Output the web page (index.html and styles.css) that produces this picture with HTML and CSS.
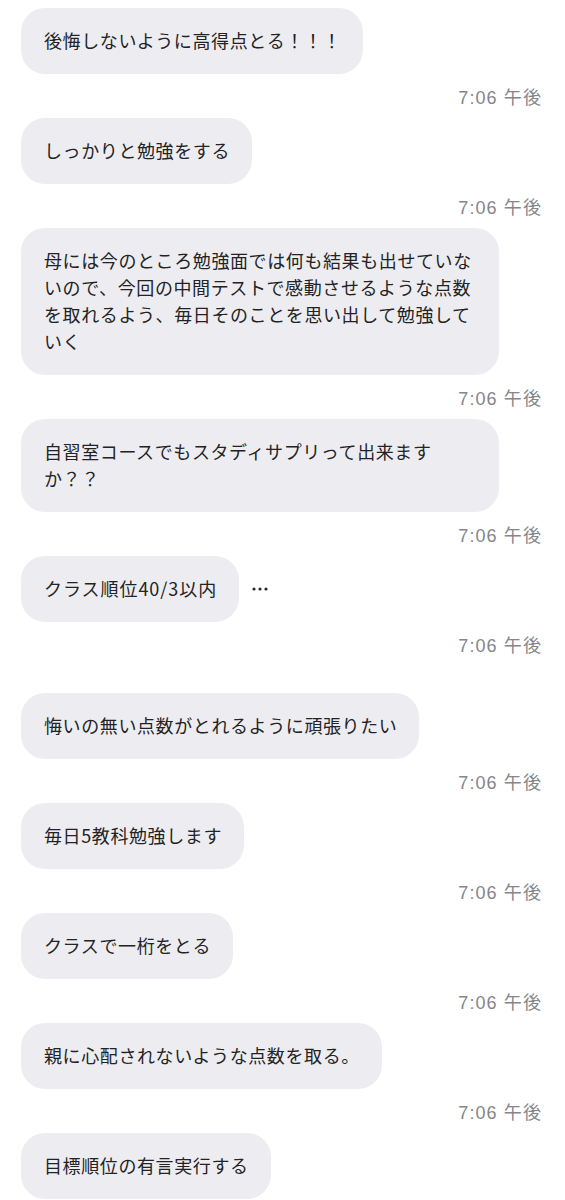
FILE: index.html
```html
<!DOCTYPE html>
<html lang="ja">
<head>
<meta charset="utf-8">
<title>チャット</title>
<link rel="stylesheet" href="styles.css">
</head>
<body>
<div class="chat">
  <div class="msg"><div class="bubble">後悔しないように高得点とる！！！</div></div>
  <div class="time">7:06 午後</div>

  <div class="msg"><div class="bubble">しっかりと勉強をする</div></div>
  <div class="time">7:06 午後</div>

  <div class="msg"><div class="bubble">母には今のところ勉強面では何も結果も出せていないので、今回の中間テストで感動させるような点数を取れるよう、毎日そのことを思い出して勉強していく</div></div>
  <div class="time">7:06 午後</div>

  <div class="msg"><div class="bubble">自習室コースでもスタディサプリって出来ますか？？</div></div>
  <div class="time">7:06 午後</div>

  <div class="msg">
    <div class="bubble bubble-wide">クラス順位40/3以内</div>
    <div class="more" aria-label="その他">
      <svg width="16" height="4" viewBox="0 0 16 4"><circle cx="2" cy="2" r="1.6"/><circle cx="8" cy="2" r="1.6"/><circle cx="14" cy="2" r="1.6"/></svg>
    </div>
  </div>
  <div class="time time-gap">7:06 午後</div>

  <div class="msg"><div class="bubble">悔いの無い点数がとれるように頑張りたい</div></div>
  <div class="time">7:06 午後</div>

  <div class="msg"><div class="bubble">毎日5教科勉強します</div></div>
  <div class="time">7:06 午後</div>

  <div class="msg"><div class="bubble">クラスで一桁をとる</div></div>
  <div class="time">7:06 午後</div>

  <div class="msg"><div class="bubble">親に心配されないような点数を取る。</div></div>
  <div class="time">7:06 午後</div>

  <div class="msg"><div class="bubble">目標順位の有言実行する</div></div>
</div>
</body>
</html>
```

FILE: styles.css
```css
html, body {
  margin: 0;
  padding: 0;
  background: #ffffff;
}

.chat {
  display: flex;
  flex-direction: column;
  padding: 8px 24px 0 21px;
  font-family: "Noto Sans CJK JP", "Noto Sans", sans-serif;
}

.msg {
  display: flex;
  align-items: center;
  gap: 13px;
}

.bubble {
  box-sizing: border-box;
  max-width: 478px;
  padding: 19px 22px 20px 23px;
  background: #ededf1;
  border-radius: 24px;
  color: #232325;
  font-size: 18px;
  letter-spacing: 0.6px;
  line-height: 27px;
}

.bubble-wide {
  letter-spacing: 0.95px;
}

.more {
  display: flex;
  align-items: center;
  fill: #2a2a2c;
}

.more svg {
  display: block;
}

.time {
  align-self: flex-end;
  margin: 14px 0 10px;
  height: 20px;
  line-height: 20px;
  color: #86868a;
  font-family: "Liberation Sans", "Noto Sans CJK JP", sans-serif;
  font-size: 18px;
  letter-spacing: 1.1px;
  margin-right: -1px;
}

.time-gap {
  margin-bottom: 37px;
}
```
